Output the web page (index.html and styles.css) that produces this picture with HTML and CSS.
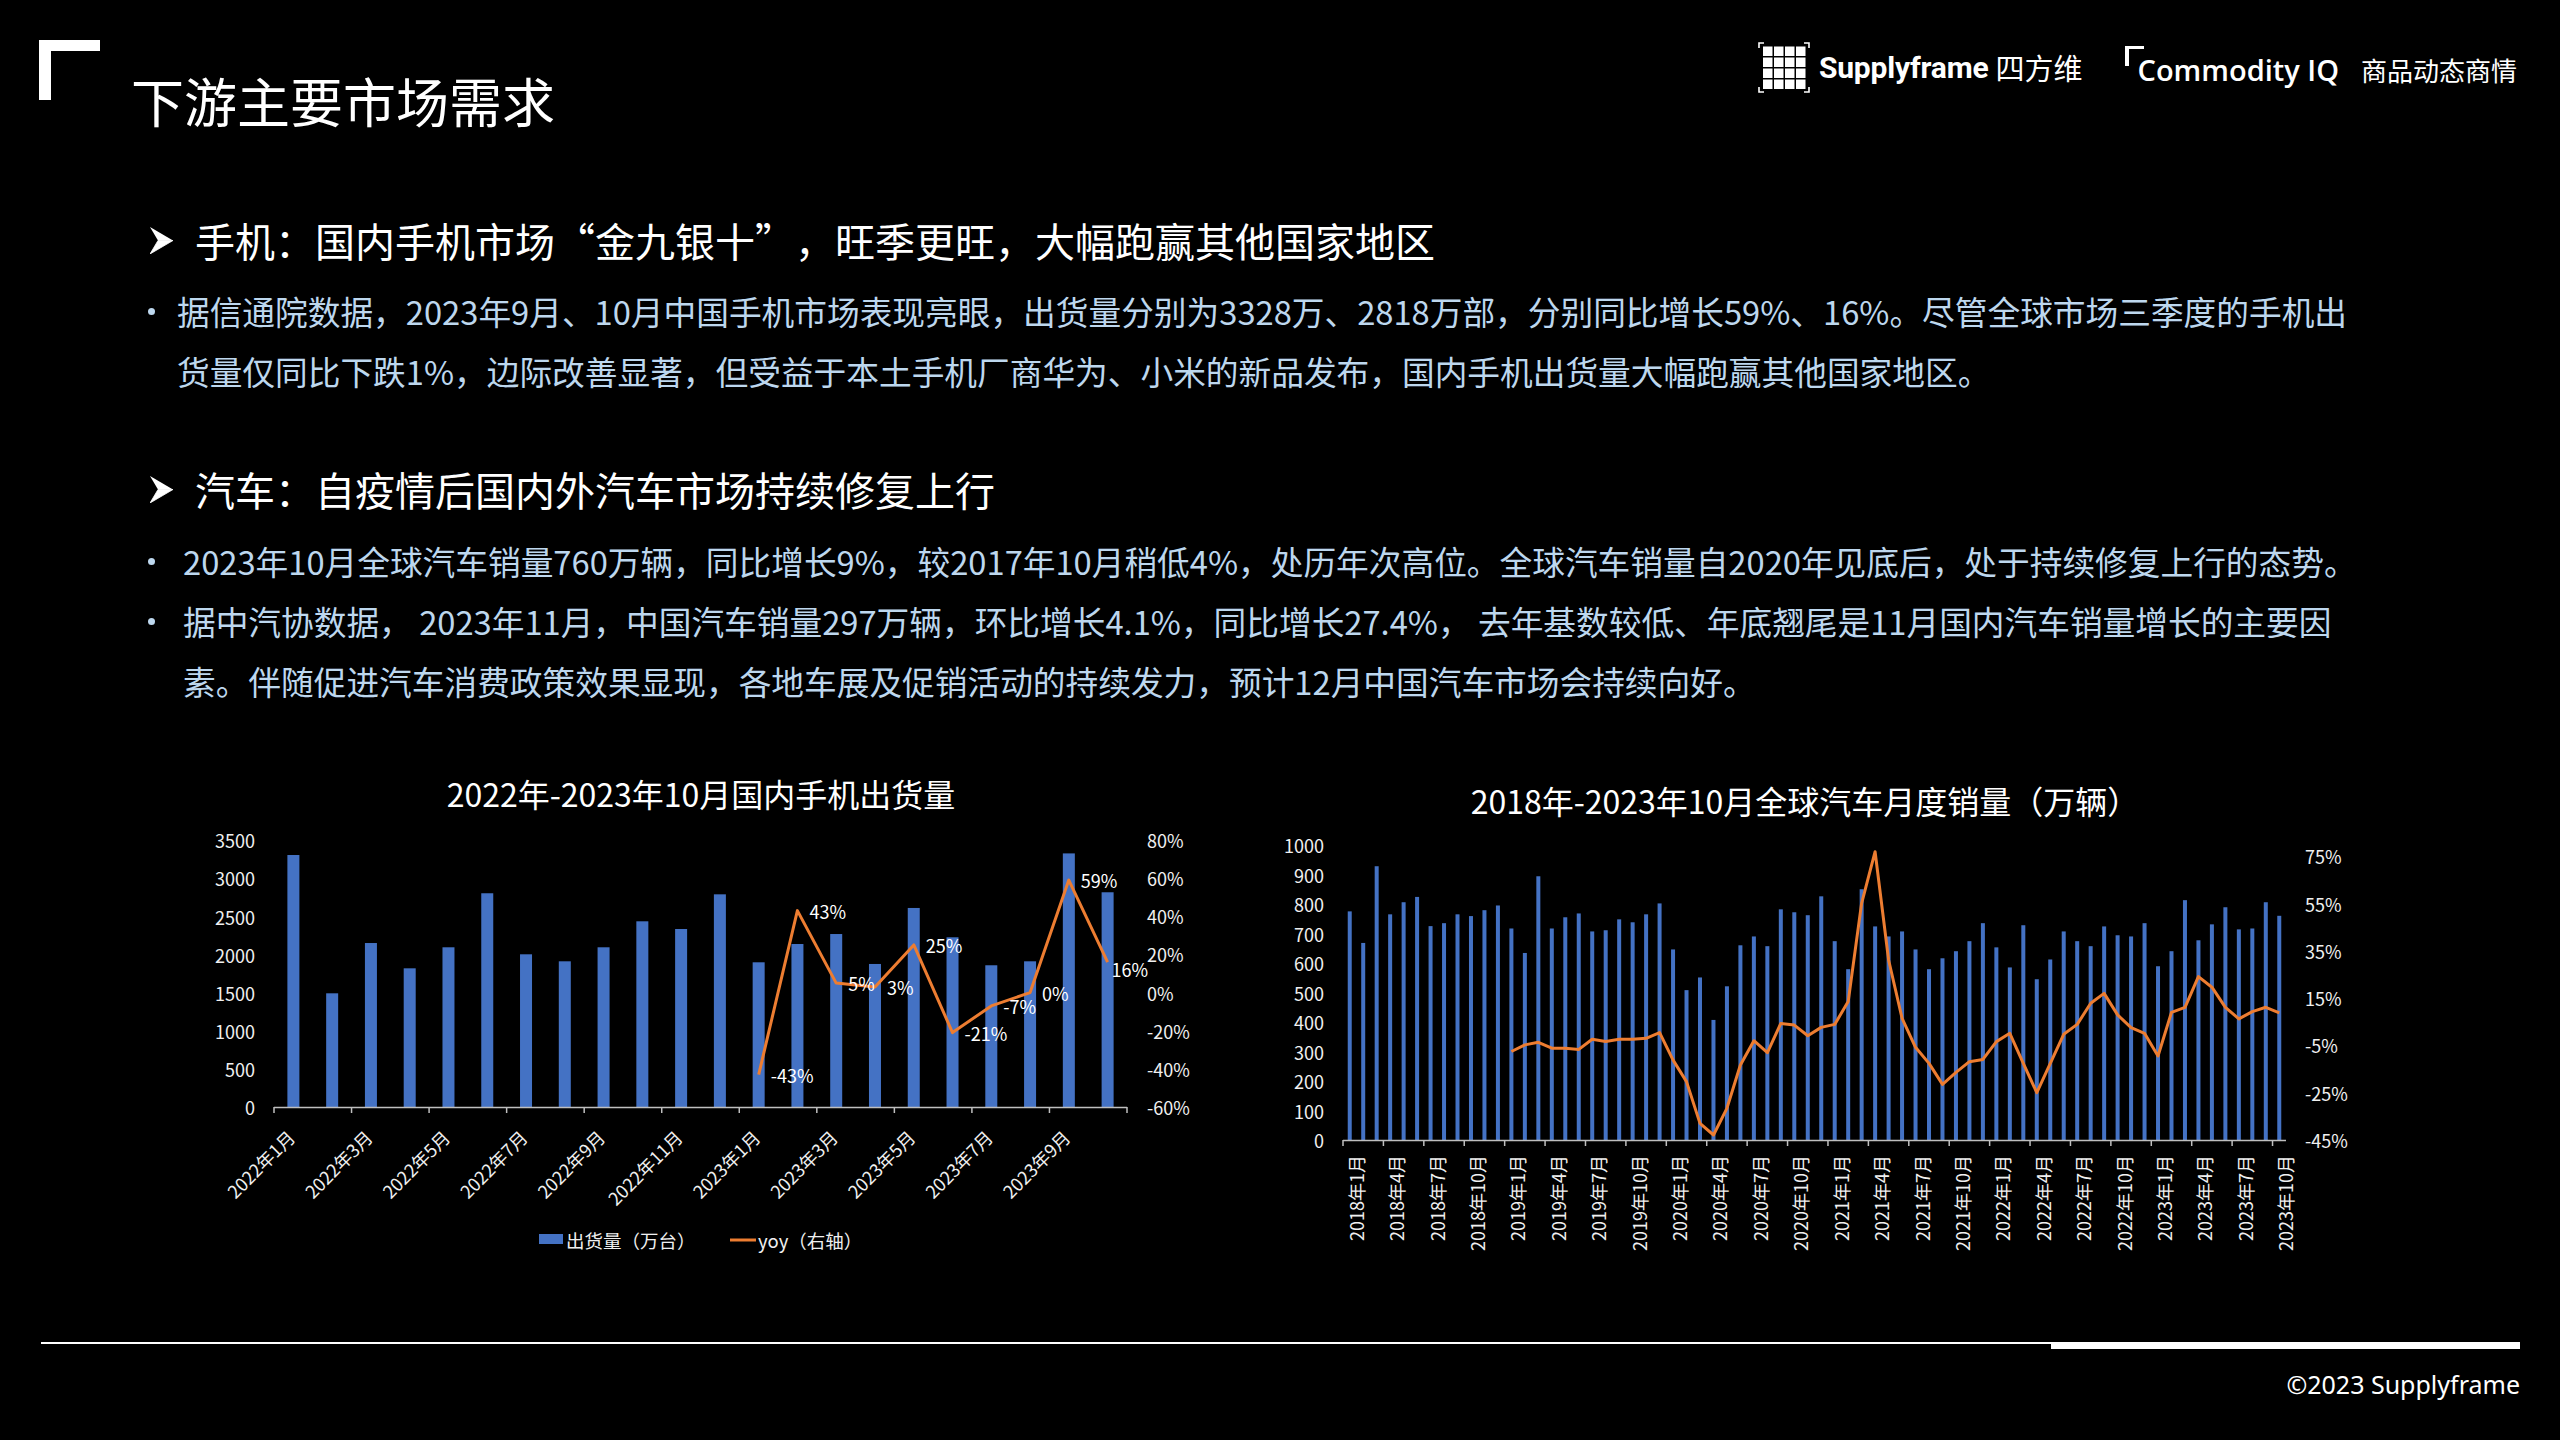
FILE: index.html
```html
<!DOCTYPE html>
<html lang="zh-CN">
<head>
<meta charset="utf-8">
<title>下游主要市场需求</title>
<link rel="stylesheet" href="styles.css">
</head>
<body>
<div class="slide">
  <header class="top">
    <div class="corner"></div>
    <h1 class="title">下游主要市场需求</h1>
    <div class="brands">
      <svg class="sf-logo" width="52" height="51" viewBox="0 0 52 51">
        <g fill="none" stroke="#fff" stroke-width="1.6">
          <path d="M1 6V1H6"/><path d="M46 1H51V6"/><path d="M1 45V50H6"/><path d="M46 50H51V45"/>
        </g>
        <g fill="#fff">
          <rect x="5" y="4.5" width="9.5" height="9.5"/><rect x="16" y="4.5" width="9.5" height="9.5"/><rect x="27" y="4.5" width="9.5" height="9.5"/><rect x="38" y="4.5" width="9.5" height="9.5"/>
          <rect x="5" y="15.5" width="9.5" height="9.5"/><rect x="16" y="15.5" width="9.5" height="9.5"/><rect x="27" y="15.5" width="9.5" height="9.5"/><rect x="38" y="15.5" width="9.5" height="9.5"/>
          <rect x="5" y="26.5" width="9.5" height="9.5"/><rect x="16" y="26.5" width="9.5" height="9.5"/><rect x="27" y="26.5" width="9.5" height="9.5"/><rect x="38" y="26.5" width="9.5" height="9.5"/>
          <rect x="5" y="37.5" width="9.5" height="9.5"/><rect x="16" y="37.5" width="9.5" height="9.5"/><rect x="27" y="37.5" width="9.5" height="9.5"/><rect x="38" y="37.5" width="9.5" height="9.5"/>
        </g>
      </svg>
      <span class="sf-name">Supplyframe</span>
      <span class="sf-cn">四方维</span>
      <span class="ciq">Commodity IQ</span>
      <span class="ciq-cn">商品动态商情</span>
    </div>
  </header>

  <main class="content">
    <section class="topic">
      <h2 class="topic-head"><svg class="arrow" width="23" height="27" viewBox="0 0 23 27"><polygon points="0,0 23,13.5 8,13.5" fill="#fff"/><polygon points="8,13.5 23,13.5 0,27" fill="#fff" stroke="#fff" stroke-width="0.8"/></svg>手机：国内手机市场“金九银十”，旺季更旺，大幅跑赢其他国家地区</h2>
      <ul class="points">
        <li>据信通院数据，2023年9月、10月中国手机市场表现亮眼，出货量分别为3328万、2818万部，分别同比增长59%、16%。尽管全球市场三季度的手机出<br>货量仅同比下跌1%，边际改善显著，但受益于本土手机厂商华为、小米的新品发布，国内手机出货量大幅跑赢其他国家地区。</li>
      </ul>
    </section>
    <section class="topic topic-second">
      <h2 class="topic-head"><svg class="arrow" width="23" height="27" viewBox="0 0 23 27"><polygon points="0,0 23,13.5 8,13.5" fill="#fff"/><polygon points="8,13.5 23,13.5 0,27" fill="#fff" stroke="#fff" stroke-width="0.8"/></svg>汽车：自疫情后国内外汽车市场持续修复上行</h2>
      <ul class="points points-wide">
        <li>2023年10月全球汽车销量760万辆，同比增长9%，较2017年10月稍低4%，处历年次高位。全球汽车销量自2020年见底后，处于持续修复上行的态势。</li>
        <li>据中汽协数据， 2023年11月，中国汽车销量297万辆，环比增长4.1%，同比增长27.4%， 去年基数较低、年底翘尾是11月国内汽车销量增长的主要因<br>素。伴随促进汽车消费政策效果显现，各地车展及促销活动的持续发力，预计12月中国汽车市场会持续向好。</li>
      </ul>
    </section>
  </main>

  <section class="charts">
    <figure class="chart chart-phone"><svg id="phoneChart" width="1000" height="510" viewBox="0 0 1000 510"></svg></figure>
    <figure class="chart chart-auto"><svg id="autoChart" width="1100" height="510" viewBox="0 0 1100 510"></svg></figure>
  </section>

  <footer class="foot">
    <div class="rule"><div class="thin"></div><div class="thick"></div></div>
    <p class="copy">©2023 Supplyframe</p>
  </footer>
</div>
<script src="script.js"></script>
</body>
</html>
```

FILE: styles.css
```css
html, body {
  margin: 0;
  padding: 0;
  background: #000;
}

body {
  font-family: "Noto Sans CJK SC", "Noto Sans", sans-serif;
  color: #fff;
}

.slide {
  width: 2560px;
  height: 1440px;
  overflow: hidden;
  background: #000;
  display: flex;
  flex-direction: column;
}

/* ---------- header ---------- */
.top {
  display: flex;
  align-items: flex-start;
  height: 170px;
  padding: 40px 43px 0 39px;
}

.corner {
  flex: none;
  width: 61px;
  height: 60px;
  box-sizing: border-box;
  border-top: 11px solid #fff;
  border-left: 12px solid #fff;
}

.title {
  margin: 30px 0 0 31px;
  font-size: 53px;
  font-weight: 400;
  line-height: 60px;
  white-space: nowrap;
}

.brands {
  margin-left: auto;
  margin-top: 1px;
  height: 52px;
  display: flex;
  align-items: center;
  white-space: nowrap;
}

.sf-logo {
  flex: none;
  display: block;
}

.sf-name {
  margin-left: 9px;
  font-family: Roboto, "Liberation Sans", sans-serif;
  font-weight: 700;
  font-size: 30px;
  letter-spacing: -0.2px;
}

.sf-cn {
  margin-left: 7px;
  font-size: 29px;
  line-height: 40px;
}

.ciq {
  position: relative;
  margin-left: 42px;
  margin-top: 6px;
  padding-left: 13px;
  font-family: "Open Sans", "Noto Sans", sans-serif;
  font-weight: 600;
  font-size: 29px;
  line-height: 40px;
}

.ciq::before {
  content: "";
  position: absolute;
  left: 0;
  top: -4px;
  width: 19px;
  height: 20px;
  box-sizing: border-box;
  border-top: 3px solid #fff;
  border-left: 4px solid #fff;
}

.ciq-cn {
  margin-left: 22px;
  margin-top: 5px;
  font-size: 26px;
  line-height: 36px;
}

/* ---------- text content ---------- */
.content {
  padding-left: 150px;
}

.topic-head {
  margin: 0;
  display: flex;
  align-items: center;
  font-size: 40px;
  font-weight: 400;
  line-height: 60px;
  white-space: nowrap;
  text-spacing-trim: space-all;
}

.arrow {
  flex: none;
  margin-right: 22px;
}

.topic-second {
  margin-top: 58px;
}

.points {
  margin: 11px 0 0 0;
  padding: 0;
  list-style: none;
}

.topic-second .points {
  margin-top: 12px;
}

.points li {
  position: relative;
  padding-left: 27px;
  font-size: 32.7px;
  line-height: 60px;
  color: #bdd7ee;
  white-space: nowrap;
}

.points-wide li {
  padding-left: 33px;
}

.points li::before {
  content: "";
  position: absolute;
  left: -2px;
  top: 27px;
  width: 7px;
  height: 7px;
  border-radius: 50%;
  background: #bdd7ee;
}

/* ---------- charts ---------- */
.charts {
  display: flex;
  gap: 70px;
  height: 510px;
  margin-top: 49px;
  padding-left: 200px;
}

.chart {
  margin: 0;
  flex: none;
}

.chart svg {
  display: block;
  font-family: "Noto Sans CJK SC", "Noto Sans", sans-serif;
}

.chart-phone { width: 1000px; }
.chart-auto { width: 1100px; }

.chart-title {
  fill: #fff;
  font-size: 32px;
}

.axis-label {
  fill: #f0f0f0;
  font-size: 18px;
}

.value-label {
  fill: #fff;
  font-size: 18px;
}

.legend-label {
  fill: #f0f0f0;
  font-size: 18.5px;
}

/* ---------- footer ---------- */
.foot {
  margin-top: 72px;
}

.rule {
  display: flex;
  align-items: flex-start;
  margin: 0 40px 0 41px;
}

.thin {
  flex: 1;
  height: 2px;
  background: #fff;
}

.thick {
  width: 469px;
  height: 7px;
  background: #fff;
}

.copy {
  margin: 17px 40px 0 0;
  text-align: right;
  font-family: "Noto Sans", "Open Sans", sans-serif;
  font-size: 25px;
  line-height: 36px;
}
```

FILE: script.js
```js
(function () {
  var NS = 'http://www.w3.org/2000/svg';
  function add(parent, tag, attrs, text) {
    var e = document.createElementNS(NS, tag);
    for (var k in attrs) e.setAttribute(k, attrs[k]);
    if (text != null) e.textContent = text;
    parent.appendChild(e);
    return e;
  }
  var BLUE = '#4472c4', ORANGE = '#ed7d31', AXIS = '#bfbfbf';

  /* ---------------- phone chart ---------------- */
  (function () {
    var svg = document.getElementById('phoneChart');
    var shipments = [3307, 1492, 2152, 1820, 2096, 2805, 2004, 1912, 2096, 2437, 2336, 2791,
                     1899, 2139, 2270, 1877, 2612, 2227, 1860, 1912, 3328, 2818];
    var yoy = [-43, 43, 5, 3, 25, -21, -7, 0, 59, 16]; // from 2023-01
    var x0 = 74, x1 = 927, base = 347, n = shipments.length;
    var step = (x1 - x0) / n;
    var yL = function (v) { return base - v / 500 * 38.1; };
    var yR = function (p) { return 232.6 - p * 1.907; };
    var cx = function (i) { return x0 + step * (i + 0.5); };

    add(svg, 'text', { x: 501, y: 33, 'text-anchor': 'middle', 'dominant-baseline': 'central', 'class': 'chart-title' },
        '2022年-2023年10月国内手机出货量');

    for (var v = 0; v <= 3500; v += 500) {
      add(svg, 'text', { x: 55, y: yL(v), 'text-anchor': 'end', 'dominant-baseline': 'central', 'class': 'axis-label' }, String(v));
    }
    for (var p = 80; p >= -60; p -= 20) {
      add(svg, 'text', { x: 947, y: yR(p), 'text-anchor': 'start', 'dominant-baseline': 'central', 'class': 'axis-label' }, p + '%');
    }

    shipments.forEach(function (s, i) {
      add(svg, 'rect', { x: cx(i) - 6, y: yL(s), width: 12, height: base - yL(s), fill: BLUE });
    });

    add(svg, 'line', { x1: x0, y1: base + 0.5, x2: x1, y2: base + 0.5, stroke: AXIS, 'stroke-width': 1.5 });
    for (var k = 0; k <= n; k += 2) {
      var tx = x0 + k * step;
      add(svg, 'line', { x1: tx, y1: base, x2: tx, y2: base + 6, stroke: AXIS, 'stroke-width': 1.5 });
    }

    var pts = yoy.map(function (q, j) { return [cx(12 + j), yR(q)]; });
    add(svg, 'polyline', { points: pts.map(function (a) { return a[0].toFixed(1) + ',' + a[1].toFixed(1); }).join(' '),
      fill: 'none', stroke: ORANGE, 'stroke-width': 3, 'stroke-linejoin': 'round' });
    yoy.forEach(function (q, j) {
      var last = j === yoy.length - 1;
      add(svg, 'text', { x: pts[j][0] + (last ? 4 : 12), y: pts[j][1] + (last ? 7 : 0),
        'dominant-baseline': 'central', 'class': 'value-label' }, q + '%');
    });

    for (var i = 0; i < n; i += 2) {
      var yr = 2022 + Math.floor(i / 12), mo = i % 12 + 1;
      var ex = cx(i) + 3, ey = 379;
      add(svg, 'text', { x: ex, y: ey, 'text-anchor': 'end', transform: 'rotate(-45 ' + ex + ' ' + ey + ')', 'class': 'axis-label' },
          yr + '年' + mo + '月');
    }

    add(svg, 'rect', { x: 339, y: 474, width: 24, height: 10, fill: BLUE });
    add(svg, 'text', { x: 366, y: 480, 'dominant-baseline': 'central', 'class': 'legend-label' }, '出货量（万台）');
    add(svg, 'line', { x1: 530, y1: 480, x2: 556, y2: 480, stroke: ORANGE, 'stroke-width': 3 });
    add(svg, 'text', { x: 558, y: 480, 'dominant-baseline': 'central', 'class': 'legend-label' }, 'yoy（右轴）');
  })();

  /* ---------------- auto chart ---------------- */
  (function () {
    var svg = document.getElementById('autoChart');
    var sales = [775, 668, 928, 765, 806, 824, 725, 735, 765, 759, 779, 795,
                 717, 634, 894, 717, 755, 768, 707, 711, 748, 738, 765, 802,
                 646, 508, 551, 407, 521, 660, 690, 657, 782, 772, 762, 826,
                 674, 579, 850, 724, 690, 707, 646, 579, 616, 640, 674, 735,
                 653, 585, 728, 545, 612, 707, 674, 657, 724, 694, 690, 735,
                 589, 640, 813, 677, 731, 789, 714, 717, 806, 760];
    var yoy = [-7.6, -4.8, -3.7, -6.2, -6.2, -6.7, -2.4, -3.4, -2.4, -2.4, -2.0, 0.4,
               -11.2, -20.3, -38.0, -42.9, -31.6, -13.3, -3.0, -8.1, 4.3, 3.6, -0.9, 2.6,
               3.9, 13.5, 55.1, 76.9, 31.1, 6.4, -5.8, -12.6, -21.5, -16.4, -11.9, -10.9,
               -3.4, 0.1, -12.6, -25.0, -12.6, -0.3, 3.9, 12.8, 17.0, 7.9, 2.5, 0.1,
               -9.5, 9.0, 11.1, 24.1, 19.6, 11.1, 6.2, 9.3, 11.1, 8.8]; // from 2019-01
    var x0 = 73, x1 = 1016, base = 380, n = sales.length;
    var step = (x1 - x0) / n;
    var yL = function (v) { return base - v * 0.295; };
    var yR = function (p) { return base - (p + 45) * 2.365; };
    var cx = function (i) { return x0 + step * (i + 0.5); };

    add(svg, 'text', { x: 535, y: 40, 'text-anchor': 'middle', 'dominant-baseline': 'central', 'class': 'chart-title' },
        '2018年-2023年10月全球汽车月度销量（万辆）');

    for (var v = 0; v <= 1000; v += 100) {
      add(svg, 'text', { x: 54, y: yL(v), 'text-anchor': 'end', 'dominant-baseline': 'central', 'class': 'axis-label' }, String(v));
    }
    for (var p = 75; p >= -45; p -= 20) {
      add(svg, 'text', { x: 1035, y: yR(p), 'text-anchor': 'start', 'dominant-baseline': 'central', 'class': 'axis-label' }, p + '%');
    }

    sales.forEach(function (s, i) {
      add(svg, 'rect', { x: cx(i) - 2, y: yL(s), width: 4, height: base - yL(s), fill: BLUE });
    });

    add(svg, 'line', { x1: x0, y1: base + 0.5, x2: x1, y2: base + 0.5, stroke: AXIS, 'stroke-width': 1.5 });
    for (var k = 0; k < n; k += 3) {
      var tx = x0 + k * step;
      add(svg, 'line', { x1: tx, y1: base, x2: tx, y2: base + 6, stroke: AXIS, 'stroke-width': 1.5 });
    }

    var pts = yoy.map(function (q, j) { return cx(12 + j).toFixed(1) + ',' + yR(q).toFixed(1); });
    add(svg, 'polyline', { points: pts.join(' '), fill: 'none', stroke: ORANGE, 'stroke-width': 3, 'stroke-linejoin': 'round' });

    for (var i = 0; i < n; i += 3) {
      var yr = 2018 + Math.floor(i / 12), mo = i % 12 + 1;
      var ex = cx(i) + 14, ey = 395;
      add(svg, 'text', { x: ex, y: ey, 'text-anchor': 'end', transform: 'rotate(-90 ' + ex + ' ' + ey + ')', 'class': 'axis-label' },
          yr + '年' + mo + '月');
    }
  })();
})();
```
